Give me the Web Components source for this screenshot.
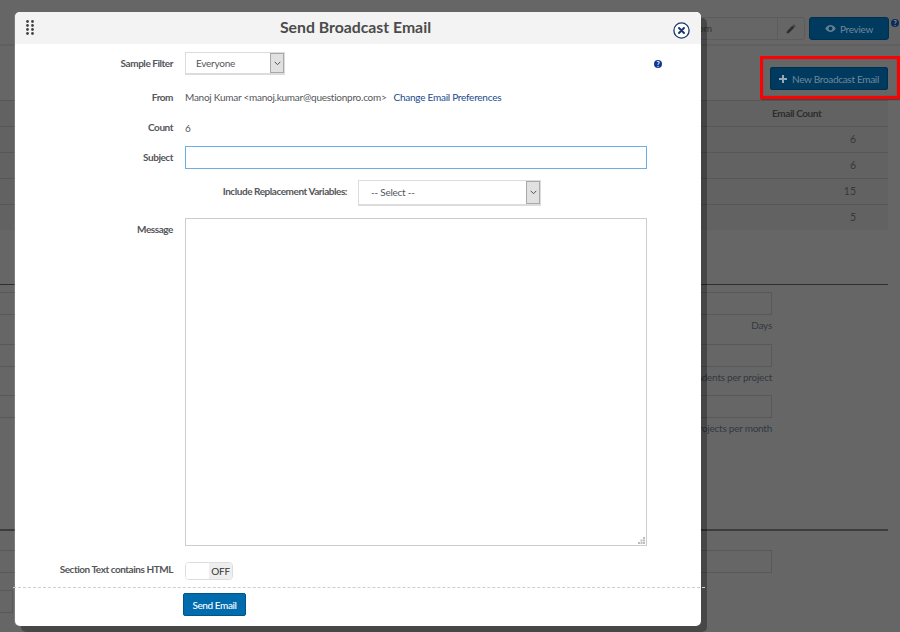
<!DOCTYPE html>
<html>
<head>
<meta charset="utf-8">
<title>Send Broadcast Email</title>
<style>
    html, body { margin: 0; padding: 0; background: #666; }
    body { width: 900px; height: 632px; overflow: hidden; position: relative; font-family: Lato, sans-serif; }
</style>
</head>
<body>
<page-toolbar></page-toolbar>
<page-actions></page-actions>
<email-table></email-table>
<settings-section></settings-section>

<broadcast-modal heading="Send Broadcast Email">
    <form-row label="Sample Filter" height="39" lift="2">
        <select-box value="Everyone" style="width:100px;height:23px;--pad:10px"></select-box>
        <span class="help" slot="aside">?</span>
    </form-row>
    <form-row label="From" height="28">
        <span>Manoj Kumar &lt;manoj.kumar@questionpro.com&gt;</span><a>Change Email Preferences</a>
    </form-row>
    <form-row label="Count" height="33" lift="2"><span>6</span></form-row>
    <form-row label="Subject" height="27" lift="1"><subject-input></subject-input></form-row>
    <form-row label="Include Replacement Variables:" height="44" lift="4" wide>
        <select-box value="-- Select --" style="width:183px;height:26px;--pad:12px"></select-box>
    </form-row>
    <form-row label="Message" height="344" align="start"><message-box></message-box></form-row>
    <form-row label="Section Text contains HTML" height="24" lift="4"><on-off></on-off></form-row>
</broadcast-modal>

<script>
    const ink = '#55565a';

    class PageToolbar extends HTMLElement {
        constructor() {
            super();
            this.attachShadow({ mode: 'open' }).innerHTML = `
                <style>
                    :host { display: flex; justify-content: flex-end; height: 46px; box-sizing: border-box; padding: 17px 0 0 0; gap: 4px; border-bottom: 2px solid #5f5f5f; }
                    .group { display: flex; width: 300px; height: 23px; border: 1px solid #5c5c5c; border-radius: 3px; box-sizing: border-box; color: #333; font-size: 10px; line-height: 21px; }
                    .txt { width: 206px; text-align: right; }
                    .gap { flex: 1; }
                    .edit { width: 27px; box-sizing: border-box; border-left: 1px solid #5c5c5c; display: flex; align-items: center; justify-content: center; }
                    .preview { width: 80px; height: 23px; background: #003a5f; border: 1px solid #00304f; border-radius: 3px; box-sizing: border-box; color: #6f899c; font-size: 10px; letter-spacing: -.3px; display: flex; align-items: center; justify-content: center; gap: 4px; }
                    .q { width: 8px; height: 8px; margin: 2px 1px 0 -2px; border-radius: 50%; background: #0b2d55; color: #8a96a8; font: bold 7px/8px Lato, sans-serif; text-align: center; }
                </style>
                <div class="group">
                    <div class="txt">om</div>
                    <div class="gap"></div>
                    <div class="edit">
                        <svg width="10" height="10" viewBox="0 0 10 10"><path d="M0.5 9.500l.6-2.600 5.300-5.300 2 2-5.300 5.300zM7 1l.7-.6 2 2-.7.6z" fill="#2f2f2f"/></svg>
                    </div>
                </div>
                <div class="preview">
                    <svg width="11" height="7" viewBox="0 0 12 8"><path d="M0 4c1.500-2.500 3.500-4 6-4s4.500 1.500 6 4c-1.500 2.500-3.500 4-6 4S1.500 6.500 0 4z" fill="#64808f"/><circle cx="6" cy="4" r="2.200" fill="#003a5f"/></svg>
                    <span>Preview</span>
                </div>
                <div class="q">?</div>`;
        }
    }

    class PageActions extends HTMLElement {
        constructor() {
            super();
            this.attachShadow({ mode: 'open' }).innerHTML = `
                <style>
                    :host { display: flex; justify-content: flex-end; height: 54px; padding: 10px 0 0 0; box-sizing: border-box; }
                    .mark { width: 140px; height: 43px; box-sizing: border-box; border: 3px solid #f00; padding: 8px 0 0 7px; box-shadow: inset 0 0 1px #333, 1px 1px 1px #444; }
                    .btn { width: 118px; height: 23px; background: #003a5f; border: 1px solid #00304f; border-radius: 2px; box-sizing: border-box; color: #6f899c; font-size: 10px; letter-spacing: -.3px; display: flex; align-items: center; justify-content: center; gap: 5px; white-space: nowrap; }
                </style>
                <div class="mark"><div class="btn">
                    <svg width="8" height="8" viewBox="0 0 8 8"><path d="M3 0h2v3h3v2H5v3H3V5H0V3h3z" fill="#98a9b6"/></svg>
                    <span>New Broadcast Email</span>
                </div></div>`;
        }
    }

    class EmailTable extends HTMLElement {
        constructor() {
            super();
            const rows = [6, 6, 15, 5].map(n => `<div class="row">${n}</div>`).join('');
            this.attachShadow({ mode: 'open' }).innerHTML = `
                <style>
                    :host { display: block; width: 888px; background: #626262; color: #383838; font-size: 10.500px; }
                    .head, .row { height: 26px; border-top: 1px solid #575757; box-sizing: border-box; line-height: 24px; }
                    .head { font-size: 10px; font-weight: 700; letter-spacing: -.4px; padding-left: 772px; color: #2e2e2e; white-space: nowrap; }
                    .row { text-align: right; padding-right: 32px; }
                </style>
                <div class="head">Email Count</div>${rows}`;
        }
    }

    class SettingsSection extends HTMLElement {
        constructor() {
            super();
            this.attachShadow({ mode: 'open' }).innerHTML = `
                <style>
                    :host { display: block; width: 888px; color: #33393f; font-size: 10px; letter-spacing: -.25px; }
                    hr { border: 0; height: 1px; background: #2f2f2f; margin: 54px 0 7px; }
                    hr.second { margin: 90px 0 19px; background: #3c3c3c; height: 2px; }
                    .row { display: flex; justify-content: space-between; height: 51.500px; padding-right: 116px; }
                    .row.tight { height: 40px; }
                    .box { height: 23px; box-sizing: border-box; border: 1px solid #585858; }
                    .left { width: 340px; margin-left: -10px; }
                    .left.short { width: 23px; }
                    .right { width: 300px; text-align: right; white-space: nowrap; line-height: 21px; }
                </style>
                <hr>
                <div class="row"><div class="box left"></div><div class="right"><div class="box"></div>Days</div></div>
                <div class="row"><div class="box left"></div><div class="right"><div class="box"></div>respondents per project</div></div>
                <div class="row" style="height:auto"><div class="box left"></div><div class="right"><div class="box"></div>projects per month</div></div>
                <hr class="second">
                <div class="row tight"><div class="box left"></div><div class="right"><div class="box"></div></div></div>
                <div class="row tight"><div class="box left short"></div></div>`;
        }
    }

    class BroadcastModal extends HTMLElement {
        constructor() {
            super();
            this.attachShadow({ mode: 'open' }).innerHTML = `
                <style>
                    :host { position: absolute; left: 15px; top: 12px; width: 686px; height: 614px; background: #fff; border-radius: 5px; box-shadow: 6px 6px 0 rgba(0,0,0,.3), -1px 0 0 rgba(255,255,255,.15); color: ${ink}; font-size: 10px; display: flex; flex-direction: column; }
                    header { height: 32px; flex: none; box-sizing: border-box; padding: 0 5px 3px 0; background: #f3f3f3; border-radius: 5px 5px 0 0; display: flex; align-items: center; justify-content: center; position: relative; }
                    h1 { margin: 0; font-size: 15.800px; font-weight: 700; color: #4b4b4b; }
                    .grip { position: absolute; left: 11px; top: 8px; }
                    .close { position: absolute; right: 11px; top: 10px; }
                    .body { flex: 1; }
                    footer { height: 39px; flex: none; margin: 0 -4px 0 -2px; border-top: 1px dashed #cfcfcf; padding: 5px 0 0 170px; box-sizing: border-box; }
                    button { width: 63px; height: 23px; padding: 0; background: #006bad; border: 1px solid #00558c; border-radius: 2px; color: #fff; font: 500 10px Lato, sans-serif; letter-spacing: -.4px; }
                </style>
                <header>
                    <svg class="grip" width="8" height="15" viewBox="0 0 8 15" fill="#444">
                        <circle cx="1.500" cy="1.500" r="1.400"/><circle cx="6.500" cy="1.500" r="1.400"/>
                        <circle cx="1.500" cy="5.500" r="1.400"/><circle cx="6.500" cy="5.500" r="1.400"/>
                        <circle cx="1.500" cy="9.500" r="1.400"/><circle cx="6.500" cy="9.500" r="1.400"/>
                        <circle cx="1.500" cy="13.500" r="1.400"/><circle cx="6.500" cy="13.500" r="1.400"/>
                    </svg>
                    <h1>${this.getAttribute('heading')}</h1>
                    <svg class="close" width="17" height="17" viewBox="0 0 17 17">
                        <circle cx="8.500" cy="8.500" r="7.600" fill="#fff" stroke="#17386f" stroke-width="1.300"/>
                        <path d="M6 6l5 5M11 6l-5 5" stroke="#17386f" stroke-width="2" stroke-linecap="round"/>
                    </svg>
                </header>
                <div class="body"><slot></slot></div>
                <footer><button type="button">Send Email</button></footer>`;
        }
    }

    class FormRow extends HTMLElement {
        constructor() {
            super();
            const wide = this.hasAttribute('wide');
            const top = this.getAttribute('align') === 'start';
            const lift = this.getAttribute('lift') || 0;
            this.attachShadow({ mode: 'open' }).innerHTML = `
                <style>
                    :host { display: grid; grid-template-columns: ${wide ? '332px' : '158px'} 1fr auto; column-gap: ${wide ? 11 : 12}px; height: ${this.getAttribute('height')}px; align-items: ${top ? 'start' : 'center'}; box-sizing: border-box; color: ${ink}; font-size: 10px; letter-spacing: -.25px; ${top ? 'padding-top: 3px;' : ''} }
                    .label { font-weight: 700; letter-spacing: -.45px; text-align: right; white-space: nowrap; color: #55565a; margin-bottom: ${lift}px; ${top ? 'padding-top: 5px;' : ''} }
                    .field { display: flex; align-items: center; gap: 7px; white-space: nowrap; }
                    ::slotted(a) { color: #1a4a8c; }
                    ::slotted(.help) { width: 8px; height: 8px; margin-right: 39px; border-radius: 50%; background: #0d3a94; color: #fff; font: bold 7px/8px Lato, sans-serif; text-align: center; }
                </style>
                <div class="label">${this.getAttribute('label')}</div>
                <div class="field"><slot></slot></div>
                <slot name="aside"></slot>`;
        }
    }

    class SelectBox extends HTMLElement {
        constructor() {
            super();
            this.attachShadow({ mode: 'open' }).innerHTML = `
                <style>
                    :host { display: flex; box-sizing: border-box; border: 1px solid #dcdcdc; border-bottom-width: 2px; background: #fff; color: ${ink}; font-size: 10px; }
                    .val { flex: 1; padding: 0 0 1px var(--pad); display: flex; align-items: center; }
                    .arrow { width: 12px; background: #e1e1e1; border: 1px solid #a9a9a9; display: flex; align-items: center; justify-content: center; }
                </style>
                <div class="val">${this.getAttribute('value')}</div>
                <div class="arrow"><svg width="7" height="5" viewBox="0 0 7 5"><path d="M.7.8l2.800 2.900L6.300.8" fill="none" stroke="#555" stroke-width="1"/></svg></div>`;
        }
    }

    class SubjectInput extends HTMLElement {
        constructor() {
            super();
            this.attachShadow({ mode: 'open' }).innerHTML = `
                <style>
                    :host { display: block; }
                    input { display: block; width: 462px; height: 23px; box-sizing: border-box; border: 1px solid #66afe9; padding: 0 8px; outline: 0; }
                </style>
                <input type="text">`;
        }
    }

    class MessageBox extends HTMLElement {
        constructor() {
            super();
            this.attachShadow({ mode: 'open' }).innerHTML = `
                <style>
                    :host { display: block; position: relative; width: 462px; }
                    textarea { display: block; width: 462px; height: 328px; box-sizing: border-box; border: 1px solid #ccc; outline: 0; margin: 0; resize: none; }
                    svg { position: absolute; right: 2px; bottom: 2px; }
                </style>
                <textarea></textarea>
                <svg width="7" height="7" viewBox="0 0 7 7" fill="#bdbdbd">
                    <rect x="5" y="0" width="2" height="2"/><rect x="2.500" y="2.500" width="2" height="2"/><rect x="5" y="2.500" width="2" height="2"/>
                    <rect x="0" y="5" width="2" height="2"/><rect x="2.500" y="5" width="2" height="2"/><rect x="5" y="5" width="2" height="2"/>
                </svg>`;
        }
    }

    class OnOff extends HTMLElement {
        constructor() {
            super();
            this.attachShadow({ mode: 'open' }).innerHTML = `
                <style>
                    :host { display: flex; width: 48px; height: 18px; box-sizing: border-box; border: 1px solid #ddd; border-radius: 4px; overflow: hidden; font-size: 10px; letter-spacing: -.2px; color: #333; }
                    .knob { width: 23px; background: #fff; }
                    .off { flex: 1; background: #eee; text-align: center; line-height: 16px; }
                </style>
                <div class="knob"></div><div class="off">OFF</div>`;
        }
    }

    customElements.define('page-toolbar', PageToolbar);
    customElements.define('page-actions', PageActions);
    customElements.define('email-table', EmailTable);
    customElements.define('settings-section', SettingsSection);
    customElements.define('broadcast-modal', BroadcastModal);
    customElements.define('form-row', FormRow);
    customElements.define('select-box', SelectBox);
    customElements.define('subject-input', SubjectInput);
    customElements.define('message-box', MessageBox);
    customElements.define('on-off', OnOff);
</script>
</body>
</html>
